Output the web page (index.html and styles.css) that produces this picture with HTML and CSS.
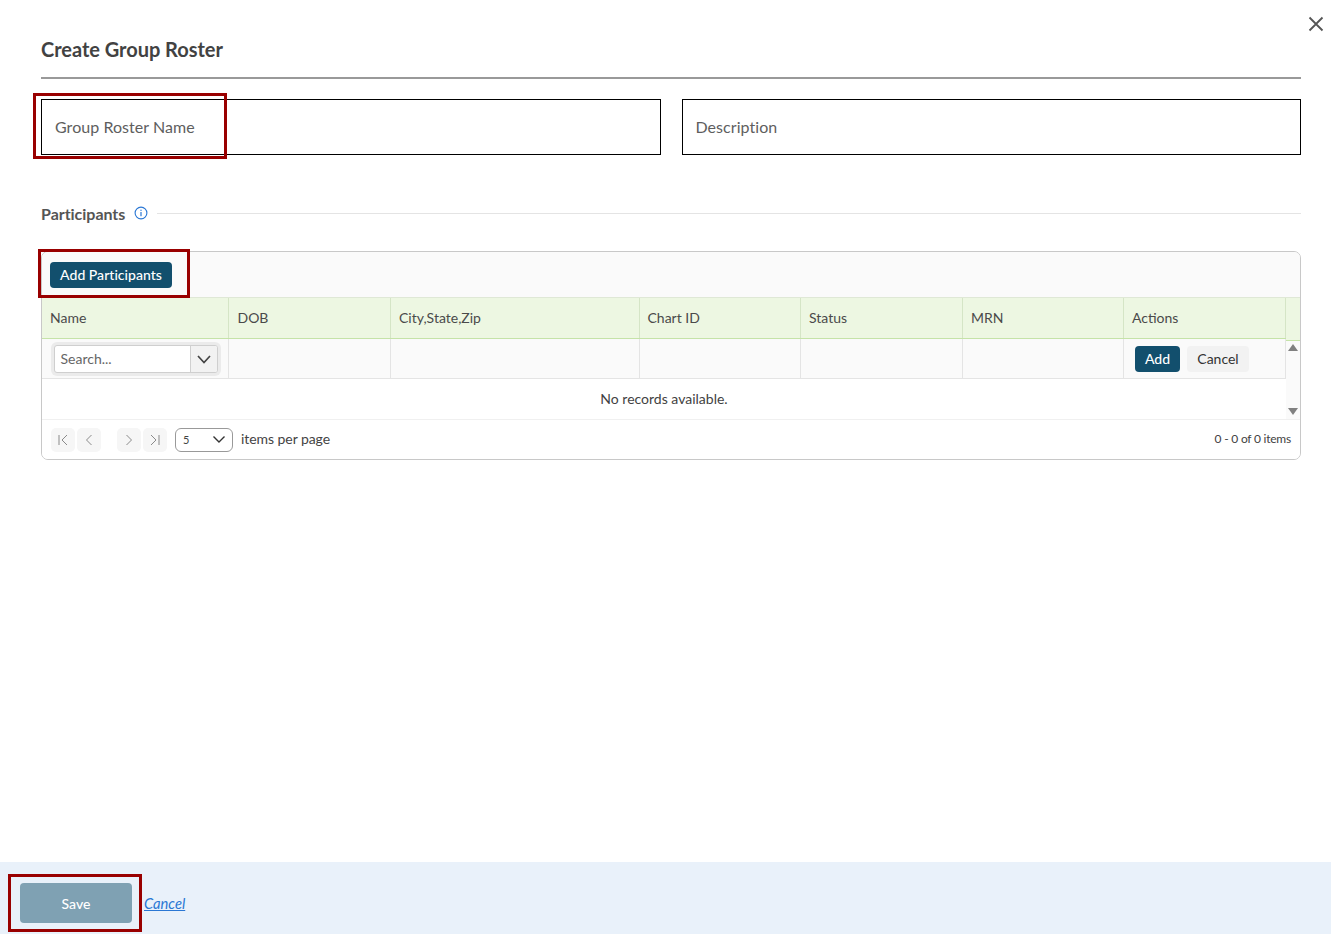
FILE: index.html
```html
<!DOCTYPE html>
<html lang="en">
<head>
<meta charset="utf-8">
<title>Create Group Roster</title>
<link rel="stylesheet" href="styles.css">
</head>
<body>
<div class="page">
  <main class="main">
    <button class="close" aria-label="Close">
      <svg width="16" height="16" viewBox="0 0 16 16"><path d="M1.5 1.5l13 13M14.5 1.5l-13 13" stroke="#555" stroke-width="1.8" fill="none"/></svg>
    </button>
    <h1 class="title">Create Group Roster</h1>
    <div class="fields">
      <div class="field">Group Roster Name</div>
      <div class="field">Description</div>
    </div>
    <div class="section">
      <span class="section-name">Participants</span>
      <svg class="info" width="14" height="14" viewBox="0 0 14 14"><circle cx="7" cy="7" r="5.9" fill="none" stroke="#2a77d4" stroke-width="1.1"/><rect x="6.4" y="6" width="1.2" height="4.2" fill="#2a77d4"/><rect x="6.4" y="3.7" width="1.2" height="1.2" fill="#2a77d4"/></svg>
      <span class="section-line"></span>
    </div>
    <div class="grid">
      <div class="toolbar"><button class="btn btn-primary">Add Participants</button></div>
      <div class="grid-body">
        <div class="table-area">
          <div class="row head">
            <div class="cell c1">Name</div>
            <div class="cell c2">DOB</div>
            <div class="cell c3">City,State,Zip</div>
            <div class="cell c4">Chart ID</div>
            <div class="cell c5">Status</div>
            <div class="cell c6">MRN</div>
            <div class="cell c7">Actions</div>
          </div>
          <div class="row filter">
            <div class="cell c1 combo-cell">
              <div class="combo">
                <span class="combo-text">Search...</span>
                <span class="combo-btn"><svg width="14" height="9" viewBox="0 0 14 9"><path d="M1 1l6 6.500L13 1" fill="none" stroke="#444" stroke-width="1.7"/></svg></span>
              </div>
            </div>
            <div class="cell c2"></div>
            <div class="cell c3"></div>
            <div class="cell c4"></div>
            <div class="cell c5"></div>
            <div class="cell c6"></div>
            <div class="cell c7 actions">
              <button class="btn btn-primary btn-add">Add</button>
              <button class="btn btn-plain">Cancel</button>
            </div>
          </div>
          <div class="empty">No records available.</div>
        </div>
        <div class="scrollbar">
          <span class="arrow up"></span>
          <span class="arrow down"></span>
        </div>
      </div>
      <div class="pager">
        <span class="page-btn"><svg width="12" height="12" viewBox="0 0 12 12"><path d="M2 1v10M10 1L5 6l5 5" fill="none" stroke="#8a8a8a" stroke-width="1"/></svg></span>
        <span class="page-btn"><svg width="12" height="12" viewBox="0 0 12 12"><path d="M8.500 1L3.500 6l5 5" fill="none" stroke="#8a8a8a" stroke-width="1"/></svg></span>
        <span class="page-gap"></span>
        <span class="page-btn"><svg width="12" height="12" viewBox="0 0 12 12"><path d="M3.500 1l5 5-5 5" fill="none" stroke="#8a8a8a" stroke-width="1"/></svg></span>
        <span class="page-btn"><svg width="12" height="12" viewBox="0 0 12 12"><path d="M10 1v10M2 1l5 5-5 5" fill="none" stroke="#8a8a8a" stroke-width="1"/></svg></span>
        <span class="page-size"><span>5</span><svg width="12" height="7" viewBox="0 0 12 7"><path d="M0.500 0.500L6 6l5.500-5.500" fill="none" stroke="#333" stroke-width="1.4"/></svg></span>
        <span class="per-page">items per page</span>
        <span class="page-info">0 - 0 of 0 items</span>
      </div>
    </div>
  </main>
  <footer class="footer">
    <button class="save">Save</button>
    <a class="cancel-link" href="#">Cancel</a>
  </footer>
  <span class="mark mark-name"></span>
  <span class="mark mark-add"></span>
  <span class="mark mark-save"></span>
</div>
</body>
</html>
```
FILE: styles.css
```css
* { box-sizing: border-box; }
html, body { margin: 0; padding: 0; background: #fff; }
body { font-family: Lato, "Open Sans", sans-serif; color: #424242; font-size: 14px; }
button { font-family: inherit; }
.page { position: relative; width: 1331px; height: 934px; display: flex; flex-direction: column; overflow: hidden; }
.main { position: relative; flex: 1; padding: 0 30px 0 41px; }
.close { position: absolute; top: 16px; right: 7px; width: 16px; height: 16px; padding: 0; border: 0; background: none; display: flex; }
.title { margin: 0; height: 79px; padding-top: 36px; font-size: 20px; line-height: 26px; font-weight: 700; letter-spacing: -0.03px; color: #424242; border-bottom: 2px solid #999; }
.fields { display: flex; gap: 21px; margin-top: 20px; }
.field { flex: 1; height: 56px; border: 1px solid #000; padding: 0 13px; line-height: 53px; font-size: 16px; letter-spacing: 0.05px; color: #5e5e5e; }
.section { display: flex; align-items: center; margin-top: 47px; height: 22px; }
.section-name { font-size: 16px; font-weight: 700; letter-spacing: -0.03px; color: #555; }
.info { margin-left: 9px; }
.section-line { flex: 1; height: 1px; margin-left: 9px; background: #e4e4e4; }
.grid { margin-top: 27px; height: 209px; border: 1px solid #c8c8c8; border-radius: 7px; overflow: hidden; background: #fff; }
.toolbar { height: 45px; padding: 10px 8px 0; background: #fafafa; }
.btn { display: inline-block; height: 26px; padding: 0; border: 0; border-radius: 4px; font-size: 14px; line-height: 26px; }
.btn-primary { width: 122px; background: #124f6d; color: #fff; font-weight: 500; letter-spacing: 0.03px; }
.btn-add { width: 45px; letter-spacing: 0; }
.btn-plain { width: 62px; background: #f2f2f2; color: #333; }
.grid-body { display: flex; height: 122px; }
.table-area { flex: none; width: 1244px; }
.row { display: flex; }
.cell { border-right: 1px solid #e4e4e4; padding: 0 8px; }
.c1 { width: 187px; }
.c2 { width: 162px; }
.c3 { width: 249px; }
.c4 { width: 161px; }
.c5 { width: 162px; }
.c6 { width: 161px; }
.c7 { width: 162px; }
.head { height: 42px; background: #edf7e2; border-top: 1px solid #dfe8d6; border-bottom: 1px solid #c5e3a8; line-height: 39px; }
.head .cell { border-right-color: #d5e5c6; padding-left: 8px; color: #4a4a4a; }
.head .c2 { padding-left: 8.5px; }
.head .c4 { padding-left: 7.5px; }
.filter { height: 40px; background: #fafafa; border-bottom: 1px solid #e4e4e4; }
.filter .cell { height: 39px; }
.combo-cell { padding: 6px 0 0 12px; }
.combo { display: flex; width: 164px; height: 28px; border: 1px solid #cfcfcf; border-radius: 3px; box-shadow: 0 0 0 3px #ebebeb; background: #fff; overflow: hidden; }
.combo-text { flex: 1; padding-left: 5.5px; line-height: 26px; color: #666; }
.combo-btn { width: 27px; display: flex; align-items: center; justify-content: center; background: #f2f2f2; border-left: 1px solid #d0d0d0; }
.actions { display: flex; gap: 7px; padding: 7px 0 0 11px; }
.empty { height: 40px; line-height: 39px; text-align: center; color: #424242; width: 1244px; }
.scrollbar { position: relative; flex: none; width: 14px; background: #fafafa; }
.scrollbar::before { content: ""; display: block; height: 42px; background: #edf7e2; border-top: 1px solid #dfe8d6; border-bottom: 1px solid #c5e3a8; }
.arrow { position: absolute; left: 1.5px; width: 0; height: 0; border-left: 5px solid transparent; border-right: 5px solid transparent; }
.up { top: 47px; border-bottom: 7px solid #808080; }
.down { top: 111px; border-top: 7px solid #808080; }
.pager { display: flex; align-items: center; height: 40px; padding: 0 9px; gap: 2px; border-top: 1px solid #f0f0f0; background: #fff; }
.page-btn { width: 24px; height: 24px; border-radius: 5px; background: #f6f6f6; display: flex; align-items: center; justify-content: center; }
.page-gap { width: 12px; }
.page-size { display: flex; align-items: center; justify-content: space-between; width: 58px; height: 24px; margin-left: 6px; padding: 0 7px; border: 1px solid #999; border-radius: 6px; font-size: 11px; color: #444; }
.per-page { margin-left: 6px; margin-top: -2px; font-size: 14px; letter-spacing: -0.06px; line-height: 24px; color: #444; }
.page-info { margin-left: auto; margin-top: -2px; font-size: 12px; letter-spacing: -0.22px; color: #424242; }
.footer { flex: none; height: 72px; background: #e9f1fa; display: flex; align-items: center; padding: 0 0 0 20px; gap: 12px; }
.save { width: 112px; height: 40px; border: 0; border-radius: 4px; background: #7fa1b3; color: #fff; font-size: 14px; font-weight: 500; margin-top: 10px; }
.cancel-link { color: #2a77d4; font-size: 14.7px; font-style: italic; margin-top: 10px; }
.mark { position: absolute; border: 3px solid #990000; pointer-events: none; }
.mark-name { left: 33px; top: 93px; width: 194px; height: 66px; }
.mark-add { left: 38px; top: 249px; width: 152px; height: 49px; }
.mark-save { left: 8px; top: 874px; width: 134px; height: 58px; }
```
